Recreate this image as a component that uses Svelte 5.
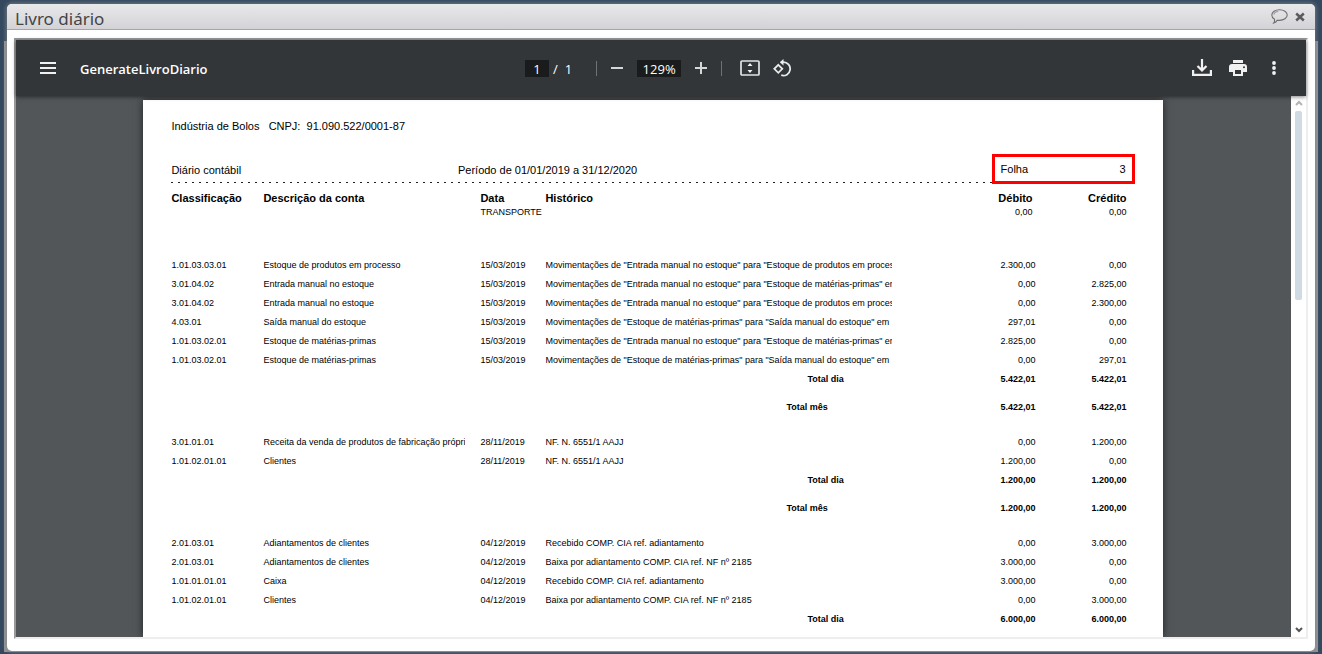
<script lang="ts">
  type Entry = {
    account: string;
    name: string;
    date: string;
    history: string;
    debit: string;
    credit: string;
  };

  type Day = { entries: Entry[]; total: string; showMonth: boolean };

  const entry = (
    account: string,
    name: string,
    date: string,
    history: string,
    debit: string,
    credit: string,
  ): Entry => ({ account, name, date, history, debit, credit });

  const days: Day[] = [
    {
      entries: [
        entry("1.01.03.03.01", "Estoque de produtos em processo", "15/03/2019", 'Movimentações de "Entrada manual no estoque" para "Estoque de produtos em processo"', "2.300,00", "0,00"),
        entry("3.01.04.02", "Entrada manual no estoque", "15/03/2019", 'Movimentações de "Entrada manual no estoque" para "Estoque de matérias-primas" em', "0,00", "2.825,00"),
        entry("3.01.04.02", "Entrada manual no estoque", "15/03/2019", 'Movimentações de "Entrada manual no estoque" para "Estoque de produtos em processo"', "0,00", "2.300,00"),
        entry("4.03.01", "Saída manual do estoque", "15/03/2019", 'Movimentações de "Estoque de matérias-primas" para "Saída manual do estoque" em', "297,01", "0,00"),
        entry("1.01.03.02.01", "Estoque de matérias-primas", "15/03/2019", 'Movimentações de "Entrada manual no estoque" para "Estoque de matérias-primas" em', "2.825,00", "0,00"),
        entry("1.01.03.02.01", "Estoque de matérias-primas", "15/03/2019", 'Movimentações de "Estoque de matérias-primas" para "Saída manual do estoque" em', "0,00", "297,01"),
      ],
      total: "5.422,01",
      showMonth: true,
    },
    {
      entries: [
        entry("3.01.01.01", "Receita da venda de produtos de fabricação própria", "28/11/2019", "NF. N. 6551/1 AAJJ", "0,00", "1.200,00"),
        entry("1.01.02.01.01", "Clientes", "28/11/2019", "NF. N. 6551/1 AAJJ", "1.200,00", "0,00"),
      ],
      total: "1.200,00",
      showMonth: true,
    },
    {
      entries: [
        entry("2.01.03.01", "Adiantamentos de clientes", "04/12/2019", "Recebido COMP. CIA ref. adiantamento", "0,00", "3.000,00"),
        entry("2.01.03.01", "Adiantamentos de clientes", "04/12/2019", "Baixa por adiantamento COMP. CIA ref. NF nº 2185", "3.000,00", "0,00"),
        entry("1.01.01.01.01", "Caixa", "04/12/2019", "Recebido COMP. CIA ref. adiantamento", "3.000,00", "0,00"),
        entry("1.01.02.01.01", "Clientes", "04/12/2019", "Baixa por adiantamento COMP. CIA ref. NF nº 2185", "0,00", "3.000,00"),
      ],
      total: "6.000,00",
      showMonth: false,
    },
  ];

  let page = $state("1");
  let zoom = $state("129%");
</script>

<div class="backdrop">
  <div class="dialog" role="dialog" aria-labelledby="dialog-title">
    <header class="titlebar">
      <h1 id="dialog-title">Livro diário</h1>
      <button type="button" aria-label="Comentários">
        <svg width="17" height="15" viewBox="0 0 17 15" fill="none" stroke="#6e6e70" stroke-width="1.1">
          <path d="M8.500.7c4.300 0 7.700 2.300 7.700 5.300s-3.400 5.400-7.700 5.400c-.8 0-1.600-.1-2.300-.2-.7 1.400-1.800 2.300-3.500 2.900.7-1 1-2.200.8-3.900C1.800 9.200.8 7.700.8 6 .8 3 4.200.7 8.500.7z" />
          <path d="M2.800 5.500c.4-1.700 2.100-2.800 4.500-3" stroke="#999" />
        </svg>
      </button>
      <button type="button" aria-label="Fechar">
        <svg width="10" height="10" viewBox="0 0 10 10" stroke="#5b5b5e" stroke-width="2.500">
          <path d="M1.200 1.500l7.600 7M8.800 1.500l-7.600 7" />
        </svg>
      </button>
    </header>

    <main class="frame">
      <div class="toolbar">
        <div class="side">
          <button type="button" aria-label="Menu">
            <svg width="16" height="12" viewBox="0 0 16 12" fill="#f1f1f1">
              <path d="M0 0h16v2H0zM0 5h16v2H0zM0 10h16v2H0z" />
            </svg>
          </button>
          <span class="file">GenerateLivroDiario</span>
        </div>

        <div class="center">
          <input class="page-input" aria-label="Página" bind:value={page} />
          <span class="slash">/</span>
          <span class="pages">1</span>
          <i class="divider"></i>
          <button type="button" aria-label="Diminuir zoom">
            <svg width="12" height="12" viewBox="0 0 12 12" fill="#d6d7d7"><path d="M0 5h12v2H0z" /></svg>
          </button>
          <input class="zoom-input" aria-label="Zoom" bind:value={zoom} />
          <button type="button" aria-label="Aumentar zoom">
            <svg width="12" height="12" viewBox="0 0 12 12" fill="#d6d7d7"><path d="M0 5h5V0h2v5h5v2H7v5H5V7H0z" /></svg>
          </button>
          <i class="divider"></i>
          <button type="button" class="fit" aria-label="Ajustar à página">
            <svg width="20" height="16" viewBox="0 0 20 16">
              <rect x="1" y="1" width="18" height="14" rx="1" fill="none" stroke="#e4e4e4" stroke-width="1.700" />
              <path d="M10 3l2.500 3h-5zM10 13l2.500-3h-5z" fill="#f1f1f1" />
            </svg>
          </button>
          <button type="button" aria-label="Girar">
            <svg width="18" height="19" viewBox="0 0 18 19" fill="none" stroke="#e8e8e8" stroke-width="1.800">
              <path d="M5.300 5.800l4 4-4 4-4-4z" />
              <path d="M9 3.200h1.200a6.700 6.700 0 1 1-2 13" />
              <path d="M10.500 0v6.400L6.800 3.200z" fill="#f1f1f1" stroke="none" />
            </svg>
          </button>
        </div>

        <div class="side actions">
          <button type="button" aria-label="Baixar">
            <svg width="20" height="18" viewBox="0 0 20 18" fill="none" stroke="#f1f1f1" stroke-width="2.200">
              <path d="M1.100 11v4.900h17.800V11M10 0v11" />
              <path d="M5.500 7L10 11.400 14.500 7" />
            </svg>
          </button>
          <button type="button" aria-label="Imprimir">
            <svg width="18" height="16" viewBox="0 0 18 16" fill="#f1f1f1">
              <path d="M4 0h10v3H4z" />
              <path fill-rule="evenodd" d="M3 4h12a3 3 0 0 1 3 3v5h-4v4H4v-4H0V7a3 3 0 0 1 3-3zm3 6v4h6v-4zm9-3.800a1 1 0 1 0 0 2 1 1 0 0 0 0-2z" />
            </svg>
          </button>
          <button type="button" aria-label="Mais ações">
            <svg width="4" height="14" viewBox="0 0 4 14" fill="#f1f1f1">
              <circle cx="2" cy="2" r="1.900" /><circle cx="2" cy="7" r="1.900" /><circle cx="2" cy="12" r="1.900" />
            </svg>
          </button>
        </div>
      </div>

      <div class="viewer">
        <div class="canvas">
          <article class="sheet">
            <p class="company">Indústria de Bolos &nbsp; CNPJ: &nbsp;91.090.522/0001-87</p>
            <div class="heading">
              <span>Diário contábil</span>
              <span class="period">Período de 01/01/2019 a 31/12/2020</span>
              <span class="folio"><span>Folha</span><span>3</span></span>
            </div>

            <table>
              <colgroup>
                <col class="col-account" />
                <col class="col-name" />
                <col class="col-date" />
                <col />
                <col class="col-value" />
                <col class="col-value" />
              </colgroup>
              <thead>
                <tr>
                  <th>Classificação</th>
                  <th>Descrição da conta</th>
                  <th>Data</th>
                  <th>Histórico</th>
                  <th class="value opening">Débito</th>
                  <th class="value">Crédito</th>
                </tr>
              </thead>
              <tbody>
                <tr class="carried">
                  <td></td>
                  <td></td>
                  <td>TRANSPORTE</td>
                  <td></td>
                  <td class="value opening">0,00</td>
                  <td class="value">0,00</td>
                </tr>
                {#each days as day}
                  {#each day.entries as row}
                    <tr>
                      <td>{row.account}</td>
                      <td><div class="clip name">{row.name}</div></td>
                      <td>{row.date}</td>
                      <td><div class="clip history">{row.history}</div></td>
                      <td class="value">{row.debit}</td>
                      <td class="value">{row.credit}</td>
                    </tr>
                  {/each}
                  <tr class="day-total">
                    <td colspan="3"></td>
                    <td>Total dia</td>
                    <td class="value">{day.total}</td>
                    <td class="value">{day.total}</td>
                  </tr>
                  {#if day.showMonth}
                    <tr class="month-total">
                      <td colspan="3"></td>
                      <td>Total mês</td>
                      <td class="value">{day.total}</td>
                      <td class="value">{day.total}</td>
                    </tr>
                  {/if}
                {/each}
              </tbody>
            </table>
          </article>
        </div>

        <div class="scrollbar" aria-hidden="true">
          <svg width="8" height="6" viewBox="0 0 8 6" fill="none" stroke="#b4b4b4" stroke-width="2"><path d="M1 5l3-3 3 3" /></svg>
          <div class="track"><div class="thumb"></div></div>
          <svg width="8" height="6" viewBox="0 0 8 6" fill="none" stroke="#555" stroke-width="2"><path d="M1 1l3 3 3-3" /></svg>
        </div>
      </div>
    </main>
  </div>
</div>

<style>
  :global(body) {
    margin: 0;
  }

  /* the grey panel is the window that lies behind the dialog */
  .backdrop {
    box-sizing: border-box;
    height: 100vh;
    padding: 4px 7px 3px;
    background:
      linear-gradient(#939495, #939495) 4px 41px / calc(100% - 8px) calc(100% - 43px) no-repeat,
      #34495f;
    overflow: hidden;
  }

  .dialog {
    display: flex;
    flex-direction: column;
    height: 100%;
    border-radius: 5px;
    background: #fff;
    box-shadow: 0 0 4px 1px rgb(130 132 136 / 80%);
    overflow: hidden;
  }

  button {
    display: flex;
    padding: 0;
    border: 0;
    background: none;
    cursor: pointer;
  }

  .titlebar {
    display: flex;
    align-items: center;
    gap: 7px;
    height: 25px;
    padding: 0 10px 0 8px;
    border-bottom: 1px solid #a3a4b3;
    background: linear-gradient(#e9e9eb, #d3d3d7);
  }

  h1 {
    flex: 1;
    margin: 0;
    padding-top: 4px;
    color: #444;
    font: 17px/20px "Noto Sans", "Open Sans", sans-serif;
  }

  .frame {
    display: flex;
    flex: 1;
    flex-direction: column;
    min-height: 0;
    margin: 8px 7px 12px;
    border: 2px solid;
    border-color: #999 #eee #eee #999;
  }

  .toolbar {
    position: relative;
    z-index: 1;
    display: flex;
    align-items: center;
    height: 56px;
    padding: 0 24px;
    background: #323639;
    box-shadow: 0 1px 4px rgb(0 0 0 / 50%);
    color: #fff;
    font: 13px/18px "Open Sans", "Noto Sans", sans-serif;
  }

  .side {
    display: flex;
    flex: 1;
    align-items: center;
    gap: 24px;
  }

  .file {
    padding-top: 2px;
    font-weight: 600;
  }

  .actions {
    justify-content: flex-end;
    gap: 17px;
    padding-right: 6px;
  }

  .actions button:last-child {
    padding-left: 8px;
  }

  .center {
    display: flex;
    align-items: center;
  }

  .center input {
    box-sizing: border-box;
    height: 17px;
    padding: 1px 0 0;
    border: 0;
    background: #191b1c;
    color: #fff;
    font: inherit;
    text-align: center;
  }

  .page-input {
    width: 24px;
  }

  .zoom-input {
    width: 44px;
    margin: 0 14px;
  }

  .slash,
  .pages {
    padding-top: 2px;
  }

  .slash {
    padding-right: 7px;
    padding-left: 4px;
  }

  .divider {
    width: 1px;
    height: 15px;
    margin: 0 14px 0 24px;
    background: #6f7274;
  }

  .zoom-input + button + .divider {
    margin: 0 18px 0 14px;
  }

  .fit {
    margin-right: 13px;
  }

  .viewer {
    display: flex;
    flex: 1;
    min-height: 0;
  }

  .canvas {
    flex: 1;
    padding: 4px 1px 0 0;
    background: #525659;
    overflow: hidden;
  }

  .sheet {
    box-sizing: border-box;
    width: 80%;
    min-height: 100%;
    margin: 0 auto;
    padding: 19px 36px 0 28px;
    background: #fff;
    box-shadow: 0 0 8px rgb(0 0 0 / 60%);
    color: #000;
    font: 11px/14px "Liberation Sans", Arial, sans-serif;
  }

  .company {
    margin: 0;
  }

  .heading {
    position: relative;
    display: flex;
    justify-content: space-between;
    margin-top: 30px;
    padding-bottom: 6px;
    background: repeating-linear-gradient(90deg, #222 0 2px, transparent 2px 7px) bottom / 100% 1px no-repeat;
  }

  .period {
    position: absolute;
    left: 30%;
  }

  .folio {
    position: absolute;
    top: -9px;
    right: -8px;
    box-sizing: border-box;
    display: flex;
    justify-content: space-between;
    width: 143px;
    padding: 5px 6px;
    border: 3px solid #f00;
    background: #fff;
  }

  table {
    width: 100%;
    table-layout: fixed;
    border-collapse: collapse;
    font-size: 9px;
    line-height: 13px;
  }

  .col-account {
    width: 92px;
  }

  .col-name {
    width: 217px;
  }

  .col-date {
    width: 65px;
  }

  .col-value {
    width: 91px;
  }

  th {
    padding: 8px 0 1px;
    font-size: 11px;
    line-height: 14px;
    text-align: left;
  }

  td {
    padding: 3px 0;
    white-space: nowrap;
  }

  .carried td {
    padding: 0 0 37px;
  }

  th.value,
  td.value {
    text-align: right;
  }

  th.opening,
  .carried td.opening {
    padding-right: 3px;
  }

  .clip {
    overflow: hidden;
  }

  .name {
    width: 202px;
  }

  .history {
    width: 347px;
  }

  .day-total,
  .month-total {
    font-weight: bold;
  }

  .day-total td {
    padding: 3px 0 2px;
  }

  .month-total td {
    padding: 13px 0 19px;
  }

  .day-total td:nth-child(2) {
    padding-left: 262px;
  }

  .month-total td:nth-child(2) {
    padding-left: 241px;
  }

  .scrollbar {
    display: flex;
    flex-direction: column;
    align-items: center;
    gap: 5px;
    box-sizing: border-box;
    width: 15px;
    padding: 4px 0;
    background: #fff;
  }

  .track {
    flex: 1;
  }

  .thumb {
    width: 7px;
    height: 37%;
    border-radius: 2px;
    background: #cfdae3;
  }
</style>
